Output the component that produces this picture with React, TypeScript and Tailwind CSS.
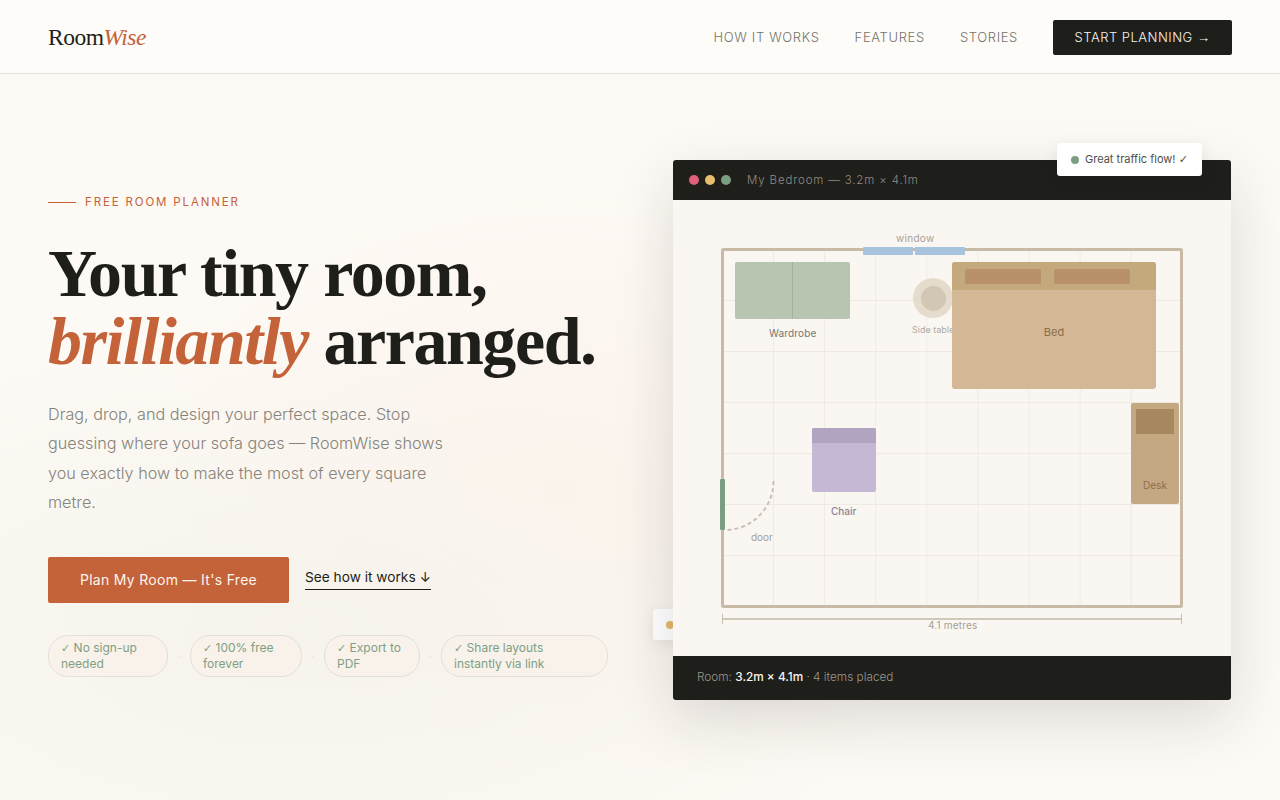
const sans = "font-['Inter','Noto_Sans',sans-serif]";

const chips = ["No sign-up needed", "100% free forever", "Export to PDF", "Share layouts instantly via link"];
const chipWidths = ["w-[120px]", "w-[112px]", "w-[96px]", "w-[167px] pr-[30px]"];
const sepWidths = ["w-[22px]", "w-[22px]", "w-[21px]"];

function Check() {
  return <span className="font-['DejaVu_Sans',sans-serif] text-[11px] leading-none">✓</span>;
}

function Nav() {
  return (
    <nav className="h-[74px] pt-[2px] flex items-center justify-between px-12 bg-[#fefcf8] border-b border-[#e3e0da]">
      <div className="font-['Liberation_Serif',serif] text-[23.5px] leading-none text-[#1e1e1a] tracking-[-0.5px]">
        Room<em className="text-[#c4623a]">Wise</em>
      </div>
      <div className="flex items-center gap-[35px] text-[13px] font-light tracking-[0.65px] text-[#75736b]">
        <a>HOW IT WORKS</a>
        <a>FEATURES</a>
        <a>STORIES</a>
        <button className="w-[179px] h-[35px] bg-[#1e1e1a] text-[#f8f5ef] rounded-[2px] text-[13px] font-light tracking-[0.5px]">
          START PLANNING <span className="font-['Liberation_Sans',sans-serif]">→</span>
        </button>
      </div>
    </nav>
  );
}

function Hero() {
  return (
    <div className="w-[560px] shrink-0 mb-[2px]">
      <div className="flex items-center gap-[9px] h-4 text-[11.5px] tracking-[1.85px] text-[#c4623a]">
        <span className="w-7 h-px bg-[#c4623a]" />
        FREE ROOM PLANNER
      </div>
      <h1 className="mt-[28px] font-['Liberation_Serif',serif] font-bold text-[68px] leading-[68px] tracking-[-1.45px] text-[#1e1e1a]">
        Your tiny room,
        <br />
        <em className="text-[#c4623a]">brilliantly</em> arranged.
      </h1>
      <p className="mt-[25px] w-[400px] text-[16.2px] font-light leading-[29.3px] text-[#85837b]">
        Drag, drop, and design your perfect space. Stop guessing where your sofa goes — RoomWise shows you exactly how to make the most of every square metre.
      </p>
      <div className="mt-[40px] flex items-center gap-4">
        <button className="w-[241px] h-[46px] pb-px bg-[#c4623a] text-[#fdf6ee] rounded-[2px] text-[14px] tracking-[0.3px]">
          Plan My Room — It's Free
        </button>
        <a className="-mt-[3px] pb-[2px] border-b border-[#1e1e1a] text-[13.7px] text-[#1e1e1a] leading-[19px]">
          See how it works ↓
        </a>
      </div>
      <div className="mt-8 flex items-center">
        {chips.map((chip, idx) => (
          <div key={chip} className="flex items-center">
            {idx > 0 && <span className={`${sepWidths[idx - 1]} text-center text-[8px] text-[#d8d4cb]`}>·</span>}
            <span className={`${chipWidths[idx]} h-[42px] px-[12px] py-[4px] rounded-[20px] border border-[#e4e0d7] bg-[#f8f2ea] text-[12px] leading-4 text-[#7f9f86]`}>
              <Check /> {chip}
            </span>
          </div>
        ))}
      </div>
    </div>
  );
}

function Label({ className, children }: { className: string; children: string }) {
  return <span className={`absolute whitespace-nowrap leading-none ${className}`}>{children}</span>;
}

function RoomPlan() {
  return (
    <div className="relative w-[462px] h-[360px] border-[3px] border-[#c8baa6] rounded-[2px] bg-[linear-gradient(to_right,#efebe4_1px,transparent_1px),linear-gradient(to_bottom,#efebe4_1px,transparent_1px)] bg-[size:51.11px_51px] bg-[position:49px_49px]">
      {/* window */}
      <div className="absolute left-[139px] top-[-4px] w-[102px] h-2 flex gap-[2px] rounded-[1px] overflow-hidden">
        <span className="flex-1 bg-[#a8c4dc]" />
        <span className="flex-1 bg-[#a8c4dc]" />
      </div>
      <Label className="left-[172px] top-[-18px] text-[10px] tracking-[0.3px] text-[#a3a098]">window</Label>

      {/* wardrobe */}
      <div className="absolute left-[11px] top-[11px] w-[115px] h-[57px] flex justify-center bg-[#b8c5b0] rounded-[2px]">
        <span className="w-px bg-[#a3b29b]" />
      </div>
      <Label className="left-[45px] top-[77px] text-[10px] tracking-[0.15px] text-[#77756e]">Wardrobe</Label>

      {/* side table */}
      <div className="absolute left-[189px] top-[27px] w-10 h-10 flex items-center justify-center rounded-full bg-[#e6dccd]">
        <span className="w-[25px] h-[25px] rounded-full bg-[#d2c6b4]" />
      </div>
      <Label className="left-[188px] top-[74px] text-[9px] text-[#adaaa2]">Side table</Label>

      {/* bed */}
      <div className="absolute left-[228px] top-[11px] w-[204px] h-[127px] flex flex-col bg-[#d4b896] rounded-[3px] overflow-hidden">
        <div className="h-7 flex gap-[13px] pl-[13px] pt-[7px] bg-[#c4a97d]">
          <span className="w-[76px] h-[15px] rounded-[2px] bg-[#b8906a]" />
          <span className="w-[76px] h-[15px] rounded-[2px] bg-[#b8906a]" />
        </div>
        <span className="mt-[37px] text-center text-[11px] leading-none text-[#8a6f4e]">Bed</span>
      </div>

      {/* chair */}
      <div className="absolute left-[88px] top-[177px] w-[64px] h-[64px] bg-[#c4b8d4] rounded-[2px] overflow-hidden">
        <div className="h-[15px] bg-[#b0a4c0]" />
      </div>
      <Label className="left-[107px] top-[255px] text-[10px] font-medium text-[#8a8299]">Chair</Label>

      {/* desk */}
      <div className="absolute left-[407px] top-[152px] w-[48px] h-[101px] flex flex-col items-center pt-[6px] bg-[#c4a882] rounded-[2px]">
        <span className="w-[38px] h-[25px] bg-[#a68760]" />
        <span className="mt-[46px] text-[10px] leading-none text-[#8a6f4e]">Desk</span>
      </div>

      {/* door */}
      <div className="absolute left-[-4px] top-[228px] w-[5px] h-[51px] bg-[#7a9e82] rounded-[1px]" />
      <svg className="absolute left-[0px] top-[229px]" width="52" height="52" viewBox="0 0 52 52" fill="none">
        <path d="M49.5 1C49.5 28 28 50 1 50" stroke="#c8c2b6" strokeWidth="2" strokeDasharray="4 3" />
      </svg>
      <Label className="left-[27px] top-[281px] text-[10px] text-[#a3a098]">door</Label>

      {/* dimension */}
      <div className="absolute left-[-2px] top-[363px] w-[460px] h-[10px] flex items-center border-x border-[#c8c0b0]">
        <span className="w-full h-[2px] bg-[#d0c8b8]" />
      </div>
      <span className="absolute left-[200px] top-[369px] px-1 bg-[#faf7f2] whitespace-nowrap text-[10px] leading-none tracking-[0.2px] text-[#a3a098]">
        4.1 metres
      </span>
    </div>
  );
}

function Planner() {
  return (
    <div className="relative w-[558px] -mt-[14px]">
      {/* sits behind the card, only its left edge shows */}
      <div className="absolute left-[-20px] top-[449px] w-[60px] h-[31px] pl-[13px] flex items-center bg-white rounded-[3px] shadow-[0_4px_16px_rgba(0,0,0,0.08)]">
        <span className="w-2 h-2 rounded-full bg-[#e8b86d]" />
      </div>
      <div className="relative h-[540px] flex flex-col bg-[#faf7f2] rounded-[3px] overflow-hidden shadow-[0_20px_60px_rgba(30,30,26,0.14)]">
        <div className="h-10 flex items-center gap-[6px] px-4 bg-[#1e1e1a]">
          <span className="w-[10px] h-[10px] rounded-full bg-[#e0607a]" />
          <span className="w-[10px] h-[10px] rounded-full bg-[#e8c06d]" />
          <span className="w-[10px] h-[10px] rounded-full bg-[#7a9e82]" />
          <span className="ml-[10px] pt-px text-[11.5px] font-light tracking-[0.85px] text-[#8f8d85]">My Bedroom — 3.2m × 4.1m</span>
        </div>
        <div className="flex-1 pt-12 pl-12">
          <RoomPlan />
        </div>
        <div className="h-11 flex items-center px-6 bg-[#1e1e1a] text-[11.8px] font-light text-[#9a9890]">
          Room:&nbsp;<strong className="font-medium text-[#f8f5ef]">3.2m × 4.1m</strong>&nbsp;· 4 items placed
        </div>
      </div>
      <div className="absolute left-[384px] top-[-17px] w-[145px] h-[33px] flex items-center gap-[6px] pl-[14px] bg-white rounded-[3px] shadow-[0_4px_16px_rgba(0,0,0,0.08)] text-[11px] text-[#4f4e48]">
        <span className="w-2 h-2 rounded-full bg-[#7a9e82]" />
        <span>
          Great traffic flow! <Check />
        </span>
      </div>
    </div>
  );
}

export default function App() {
  return (
    <div className={`w-[1280px] h-[800px] overflow-hidden flex flex-col ${sans} bg-[#fdfaf5]`}>
      <Nav />
      <main className="flex-1 flex items-center justify-between pl-12 pr-[49px] bg-[radial-gradient(ellipse_620px_300px_at_300px_560px,#f6f3ec_0%,transparent_100%),radial-gradient(ellipse_500px_340px_at_560px_420px,#fcf3ec_0%,transparent_100%)]">
        <Hero />
        <Planner />
      </main>
    </div>
  );
}
